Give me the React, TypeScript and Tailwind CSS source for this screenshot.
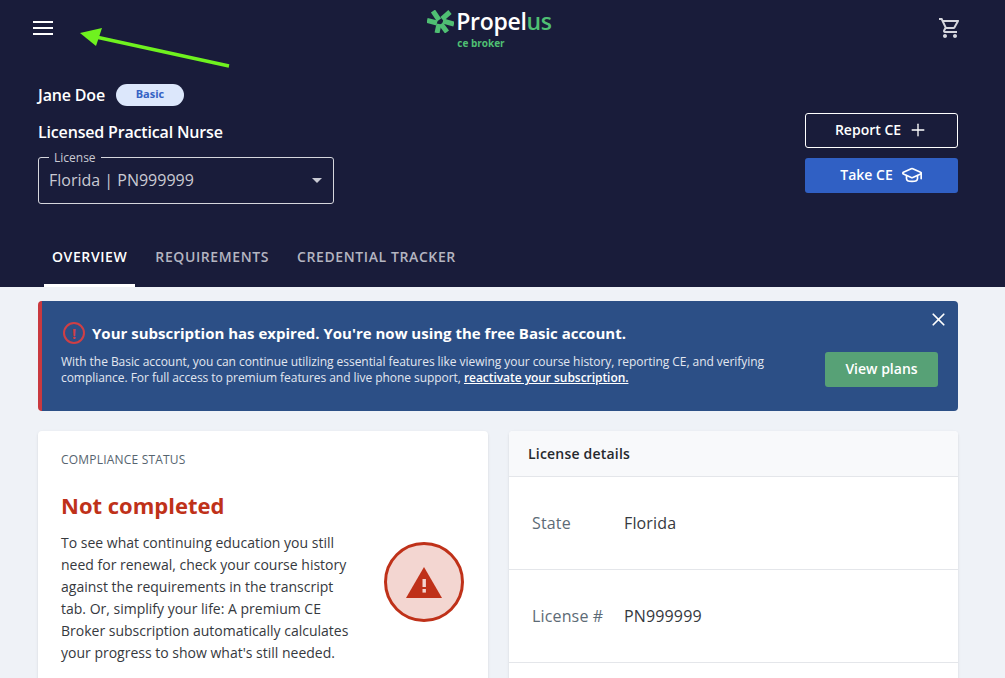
import React from 'react';
import { Plus, X, GraduationCap } from 'lucide-react';
import { MdOutlineShoppingCart } from 'react-icons/md';

const PropelusMark = () => (
  <svg width="27" height="23" viewBox="0 0 27 23" stroke="#4fbf73" strokeWidth="5" fill="none">
    <path d="M6 1L12 10" />
    <path d="M23 2L15 9" />
    <path d="M0 10.5L10 13" />
    <path d="M27 14L16 11" />
    <path d="M10 23L12 14" />
    <path d="M20 22L14 14" />
  </svg>
);

const Header = () => (
  <header className="h-[287px] bg-[#191c3a] flex flex-col text-white">
    <div className="h-[57px] flex items-start justify-between pl-[33px] pr-[43px]">
      <div className="pt-[21px] flex flex-col gap-[4px] w-5">
        <span className="h-[2px] bg-white" />
        <span className="h-[2px] bg-white" />
        <span className="h-[2px] bg-white" />
      </div>
      <div className="flex flex-col items-start pt-[8px] mr-[12px]">
        <div className="flex items-center gap-[2px] h-[27px]">
          <PropelusMark />
          <span className="text-[23px] leading-[27px] font-semibold tracking-[-0.3px]">
            Propel<span className="text-[#4fbf73]">us</span>
          </span>
        </div>
        <span className="pl-[30px] text-[10px] leading-[14px] mt-[1px] font-bold text-[#4fbf73]">ce broker</span>
      </div>
      <MdOutlineShoppingCart className="mt-[16px] text-[#d5d6dd]" size={24} />
    </div>
    <div className="flex justify-between pl-[38px] pr-[47px]">
      <div className="w-[296px]">
        <div className="flex items-center gap-[11px] h-[27px] mt-[24px]">
          <span className="text-[16px] font-semibold tracking-[-0.17px]">Jane Doe</span>
          <span className="w-[68px] h-[22px] rounded-full bg-[#dce7fb] text-[#3462c4] text-[11px] font-bold flex items-center justify-center">
            Basic
          </span>
        </div>
        <div className="mt-[13px] text-[16px] leading-[22px] font-semibold tracking-[-0.17px]">Licensed Practical Nurse</div>
        <div className="relative mt-[14px] h-[47px] border border-[#d5d6dd] rounded-[3px] flex items-center justify-between pl-[10px] pr-[11px]">
          <span className="absolute left-[10px] top-[-7px] px-[5px] bg-[#191c3a] text-[12px] leading-[14px] text-[#c9cad3]">
            License
          </span>
          <span className="text-[16px] text-[#c9cad3] mb-[1px]">Florida | PN999999</span>
          <span className="w-0 h-0 border-x-[5px] border-x-transparent border-t-[5px] border-t-[#c9cad3]" />
        </div>
      </div>
      <div className="w-[153px] flex flex-col gap-[10px] pt-[56px]">
        <button className="h-[35px] pb-[2px] border border-white rounded-[3px] flex items-center justify-center gap-[7px] text-[14px] leading-[20px] font-semibold">
          Report CE
          <Plus size={20} strokeWidth={1.6} />
        </button>
        <button className="h-[35px] pb-[2px] bg-[#3060c4] rounded-[3px] flex items-center justify-center gap-[8px] text-[14px] leading-[20px] font-semibold">
          Take CE
          <GraduationCap size={22} strokeWidth={1.8} />
        </button>
      </div>
    </div>
    <nav className="mt-auto flex gap-[12px] pl-[44px] text-[14px] leading-[20px] tracking-[0.6px] font-semibold">
      <a className="px-[8px] pb-[17px] border-b-[3px] border-white text-white">OVERVIEW</a>
      <a className="px-[8px] pb-[20px] text-[#b4b5c1]">REQUIREMENTS</a>
      <a className="px-[8px] pb-[20px] text-[#b4b5c1]">CREDENTIAL TRACKER</a>
    </nav>
  </header>
);

const Banner = () => (
  <div className="relative h-[110px] rounded-[4px] bg-[#2c4f86] border-l-[4px] border-[#c9393f] flex items-start justify-between pl-[19px] pr-[20px] pt-[21px] text-white">
    <div className="w-[720px]">
      <div className="flex items-center gap-[7px]">
        <span className="w-[22px] h-[22px] rounded-full border-2 border-[#cf3f45] text-[#cf3f45] flex items-center justify-center text-[14px] font-bold ml-[2px]">
          !
        </span>
        <span className="text-[15px] leading-[22px] font-bold">
          Your subscription has expired. You're now using the free Basic account.
        </span>
      </div>
      <p className="mt-[10px] text-[12px] leading-[16px] tracking-[-0.05px] text-[#e3e7f0]">
        With the Basic account, you can continue utilizing essential features like viewing your course history, reporting CE, and verifying compliance. For full access to premium features and live phone support,{' '}
        <a className="font-semibold underline text-white">reactivate your subscription.</a>
      </p>
    </div>
    <button className="w-[113px] h-[35px] pb-[2px] rounded-[3px] bg-[#57a176] text-[14px] font-semibold mt-[30px]">View plans</button>
    <X className="absolute right-[9px] top-[8px]" size={21} strokeWidth={2} />
  </div>
);

const Compliance = () => (
  <section className="bg-white rounded-[4px] shadow-sm h-[300px] px-[23px] pt-[20px]">
    <div className="text-[12px] leading-[18px] text-[#56646f] font-medium tracking-[0.2px]">COMPLIANCE STATUS</div>
    <h2 className="mt-[21px] text-[22px] leading-[30px] font-bold text-[#bf3119]">Not completed</h2>
    <div className="flex items-start justify-between mt-[12px] pr-[1px]">
      <p className="w-[296px] text-[14px] leading-[22px] text-[#36393e]">
        To see what continuing education you still need for renewal, check your course history against the requirements in the transcript tab. Or, simplify your life: A premium CE Broker subscription automatically calculates your progress to show what's still needed.
      </p>
      <div className="w-[80px] h-[80px] mt-[10px] rounded-full border-[3px] border-[#bf3119] bg-[#f3d6d1] flex items-center justify-center">
        <svg width="36" height="31" viewBox="0 0 36 31">
          <path d="M18 0l18 31H0z" fill="#bf3119" />
          <rect x="16.5" y="12" width="3.4" height="8" fill="#f3d6d1" />
          <rect x="16.5" y="22" width="3.4" height="3.6" fill="#f3d6d1" />
        </svg>
      </div>
    </div>
  </section>
);

const DetailRow = ({ label, value }: { label: string; value: string }) => (
  <div className="h-[93px] border-b border-[#e4e6ea] flex items-center pl-[23px] text-[16px] tracking-[0.15px]">
    <span className="w-[92px] text-[#5d6b76]">{label}</span>
    <span className="text-[#36393e]">{value}</span>
  </div>
);

const LicenseDetails = () => (
  <section className="bg-white rounded-[4px] shadow-sm h-[300px]">
    <div className="h-[46px] bg-[#f8f9fb] border-b border-[#e4e6ea] rounded-t-[4px] flex items-center pl-[19px] text-[14px] font-semibold tracking-[0.2px] text-[#26292e]">
      License details
    </div>
    <DetailRow label="State" value="Florida" />
    <DetailRow label="License #" value="PN999999" />
  </section>
);

const App = () => {
  return (
    <div className="relative h-[678px] overflow-hidden bg-[#eff2f7] font-['Open_Sans',sans-serif]">
      <Header />
      <main className="pt-[14px] pl-[38px] pr-[47px]">
        <Banner />
        <div className="grid grid-cols-[450px_449px] gap-[21px] mt-[20px]">
          <Compliance />
          <LicenseDetails />
        </div>
      </main>
      {/* annotation arrow drawn on top of the screenshot */}
      <svg className="absolute left-[78px] top-[26px]" width="155" height="44" viewBox="0 0 155 44">
        <path d="M151 40L18 11" stroke="#6ff21f" strokeWidth="3.4" fill="none" />
        <path d="M2 7L24 2L18 20z" fill="#6ff21f" />
      </svg>
    </div>
  );
};

export default App;
